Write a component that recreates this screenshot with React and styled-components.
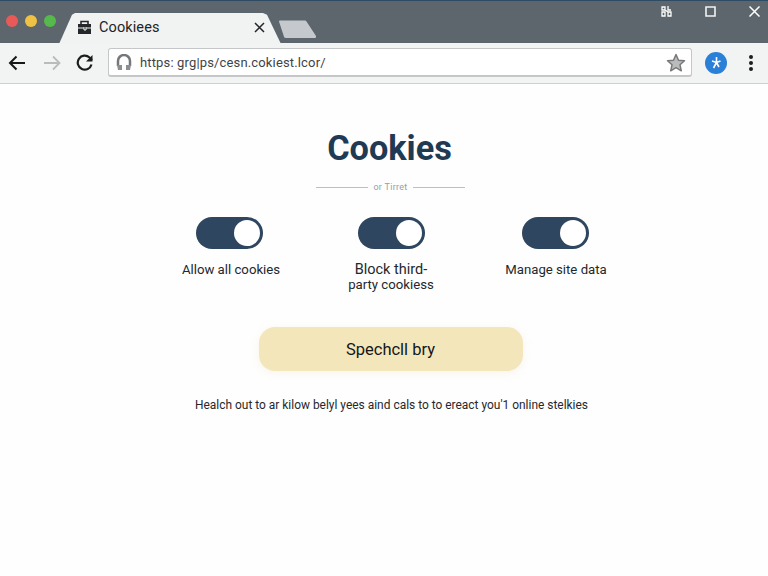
import React from "react";
import styled, { createGlobalStyle } from "styled-components";

const Global = createGlobalStyle`
  html, body { margin: 0; padding: 0; background: #fefefe; }
  * { box-sizing: border-box; }
  body { font-family: Roboto, "Liberation Sans", sans-serif; }
`;
const Frame = styled.div`width: 768px; height: 576px; overflow: hidden; display: flex; flex-direction: column;`;
const TitleBar = styled.div`
  height: 43px; background: #5d666d; border-top: 1px solid #2f4a63;
  display: flex; align-items: flex-start; position: relative; flex: none;
`;
const Lights = styled.div`display: flex; gap: 7px; padding: 14px 0 0 6px;`;
const Light = styled.span`width: 12px; height: 12px; border-radius: 50%; background: ${p => p.$c};`;
const Tab = styled.div`
  position: absolute; left: 59px; top: 12px; width: 222px; height: 31px; background: #f1f2f2;
  clip-path: polygon(0 100%, 13px 6%, 16px 0, 204px 0, 208px 6%, 222px 100%);
  display: flex; align-items: center; padding: 0 16px 2px 18px; color: #202428;
`;
const TabTitle = styled.span`font-size: 14.5px; margin-left: 7px; flex: 1; letter-spacing: .1px;`;
const GhostTab = styled.svg`position: absolute; left: 278px; top: 19px;`;
const WinControls = styled.div`
  position: absolute; right: 8px; top: 4px; display: flex; align-items: center; gap: 33px; color: #fff;
`;
const Toolbar = styled.div`
  height: 41px; background: #f2f3f3; border-bottom: 1px solid #cfd0d1;
  display: flex; align-items: center; flex: none; padding: 0 0 1px 8px;
`;
const NavIcon = styled.svg`flex: none; margin-right: ${p => p.$mr}px;`;
const Omnibox = styled.div`
  width: 584px; height: 29px; margin-left: 1px; background: #fff; border: 1px solid #c4c6c7; border-bottom-width: 2px;
  border-radius: 3px; display: flex; align-items: center; padding: 0 5px 0 7px;
`;
const Url = styled.span`font-size: 13px; color: #3f4347; margin-left: 8px; flex: 1; letter-spacing: .15px;`;
const Avatar = styled.div`
  width: 22px; height: 22px; border-radius: 50%; background: #2a7fd6; margin-left: 13px;
  display: flex; align-items: center; justify-content: center; flex: none;
`;
const Kebab = styled.div`display: flex; flex-direction: column; gap: 2px; margin-left: 22px;`;
const Dot = styled.span`width: 4px; height: 4px; border-radius: 50%; background: #1c1f22;`;
const Page = styled.main`
  flex: 1; background: #fefefe; display: flex; flex-direction: column; align-items: center; padding-top: 44px;
`;
const Title = styled.h1`
  margin: 0 0 0 11px; font-size: 34.3px; line-height: 40px; font-weight: 700; color: #1f3a52;
`;
const Divider = styled.div`display: flex; align-items: center; gap: 5px; margin: 14px 0 0 13px; height: 10px;`;
const Rule = styled.span`width: 52px; height: 1px; background: #bdbfc0;`;
const DividerText = styled.span`font-size: 9px; color: #9a9c9e; letter-spacing: .3px; line-height: 10px;`;
const Options = styled.div`
  display: grid; grid-template-columns: 155px 165px 165px; margin: 25px 0 0 24px; justify-items: center;
`;
const Option = styled.div`display: flex; flex-direction: column; align-items: center; width: 130px;`;
const Toggle = styled.div`
  width: 67px; height: 32px; border-radius: 16px; background: #2e465f; padding: 3px;
  display: flex; justify-content: flex-end; margin-left: ${p => p.$off}px;
`;
const Knob = styled.span`width: 26px; height: 26px; border-radius: 50%; background: #fff;`;
const Label = styled.div`
  font-size: 13.2px; line-height: 15px; color: #24282c; text-align: center; margin-top: 13px;
`;
const LabelLead = styled.span`font-size: 14.5px;`;
const Action = styled.button`
  width: 264px; height: 44px; border: 0; border-radius: 16px; background: #f3e6bb; margin: 35px 0 0 13px;
  font: 400 16.5px Roboto, sans-serif; color: #141618; box-shadow: 0 2px 8px rgba(230,215,170,.25);
`;
const Note = styled.p`margin: 27px 0 0 15px; font-size: 11.95px; line-height: 15px; color: #26292c;`;

export default function App() {
  return (
    <Frame>
      <Global />
      <TitleBar>
        <Lights>
          <Light $c="#e85a58" /><Light $c="#efc144" /><Light $c="#56b94c" />
        </Lights>
        <Tab>
          <svg width="15" height="15" viewBox="0 0 15 15">
            <path d="M1 4h13v10H1z" fill="#24272a" />
            <path d="M4 4V1.5h7V4" fill="none" stroke="#24272a" strokeWidth="1.6" />
            <path d="M1 8h6M9 8h5M7 7v3h2V7" stroke="#f1f2f2" strokeWidth="1" fill="none" />
          </svg>
          <TabTitle>Cookiees</TabTitle>
          <svg width="11" height="11" viewBox="0 0 11 11">
            <path d="M1 1l9 9M10 1l-9 9" stroke="#24272a" strokeWidth="1.5" />
          </svg>
        </Tab>
        <GhostTab width="40" height="19" viewBox="0 0 40 19">
          <path d="M1 1.5q0-1 1-1h25q1 0 1.500 1L38 16q.6 2-1 2H8q-1.500 0-2-1.200z" fill="#c5c9cd" />
        </GhostTab>
        <WinControls>
          <svg width="11" height="12" viewBox="0 0 11 12" fill="none" stroke="#fff" strokeWidth="1.300">
            <path d="M1 2h3v3H1zM7 1v4h3M1 7h3v4H1zM7 7h3v4H7zM4 5l3 2" />
          </svg>
          <svg width="11" height="11" viewBox="0 0 11 11" fill="none" stroke="#f2f2f2" strokeWidth="1.600">
            <path d="M1 1h9v9H1z" />
          </svg>
          <svg width="11" height="11" viewBox="0 0 11 11" fill="none" stroke="#fff" strokeWidth="1.500">
            <path d="M.5.5l10 10M10.500.5l-10 10" />
          </svg>
        </WinControls>
      </TitleBar>
      <Toolbar>
        <NavIcon $mr={17} width="18" height="16" viewBox="0 0 18 16" fill="none" stroke="#16181a" strokeWidth="2">
          <path d="M17 8H2M8.500 1.500L2 8l6.500 6.500" />
        </NavIcon>
        <NavIcon $mr={15} width="18" height="16" viewBox="0 0 18 16" fill="none" stroke="#b9bbbd" strokeWidth="1.800">
          <path d="M1 8h15M10 1.500L16.500 8 10 14.500" />
        </NavIcon>
        <NavIcon $mr={13} width="18" height="18" viewBox="0 0 18 18" fill="none" stroke="#1b1d1f" strokeWidth="2.200">
          <path d="M15.500 10.500A7 7 0 1 1 13.500 3.500L16 6" />
          <path d="M16.500 1v6.500H10" fill="#1b1d1f" stroke="none" />
        </NavIcon>
        <Omnibox>
          <svg width="16" height="17" viewBox="0 0 16 17" fill="none">
            <path d="M2 12V7a6 6 0 0 1 12 0v5" stroke="#74787b" strokeWidth="2.500" />
            <path d="M1 11h5v5H2zM10 11h5l-1 5h-4z" fill="#8b8f92" />
          </svg>
          <Url>https: grg|ps/cesn.cokiest.lcor/</Url>
          <svg width="20" height="19" viewBox="0 0 20 19">
            <path d="M10 1.500l2.500 5.700 6 .6-4.500 4 1.300 6L10 14.700l-5.300 3.100 1.300-6-4.500-4 6-.6z" fill="#b9bbbc" stroke="#77797b" strokeWidth="1.500" strokeLinejoin="round" />
          </svg>
        </Omnibox>
        <Avatar>
          <svg width="12" height="13" viewBox="0 0 12 13" fill="none" stroke="#fff" strokeWidth="1.600">
            <path d="M6.500 1v5M2 5l4.500 1.500L10.500 5M6.500 6.500L3.500 12M6.500 6.500L9 11" />
          </svg>
        </Avatar>
        <Kebab><Dot /><Dot /><Dot /></Kebab>
      </Toolbar>
      <Page>
        <Title>Cookies</Title>
        <Divider>
          <Rule /><DividerText>or Tirret</DividerText><Rule />
        </Divider>
        <Options>
          <Option>
            <Toggle $off={-3}><Knob /></Toggle>
            <Label>Allow all cookies</Label>
          </Option>
          <Option>
            <Toggle $off={1}><Knob /></Toggle>
            <Label><LabelLead>Block third-</LabelLead><br />party cookiess</Label>
          </Option>
          <Option>
            <Toggle $off={-1}><Knob /></Toggle>
            <Label>Manage site data</Label>
          </Option>
        </Options>
        <Action>Spechcll bry</Action>
        <Note>Healch out to ar kilow belyl yees aind cals to to ereact you'1 online stelkies</Note>
      </Page>
    </Frame>
  );
}
